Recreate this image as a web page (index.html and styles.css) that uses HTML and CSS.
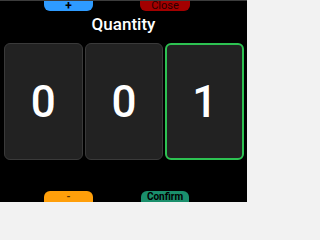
FILE: index.html
```html
<!DOCTYPE html>
<html>
<head>
<meta charset="utf-8">
<link rel="stylesheet" href="styles.css">
</head>
<body>
<div class="screen">
  <div class="btn-row top">
    <div class="btn blue">+</div>
    <div class="btn red">Close</div>
  </div>
  <div class="title">Quantity</div>
  <div class="cards">
    <div class="card">0</div>
    <div class="card">0</div>
    <div class="card active">1</div>
  </div>
  <div class="btn-row bottom">
    <div class="btn orange">-</div>
    <div class="btn green">Confirm</div>
  </div>
</div>
</body>
</html>
```
FILE: styles.css
```css
html, body {
  margin: 0;
  padding: 0;
  background: #f2f2f2;
}
.screen {
  width: 247px;
  height: 201px;
  border-top: 1px solid #3c3c3c;
  background: #000;
  display: flex;
  flex-direction: column;
  font-family: Roboto, "Liberation Sans", sans-serif;
  color: #fff;
}
.btn-row {
  display: flex;
  padding-left: 44px;
  gap: 47px;
}
.btn {
  height: 10px;
  line-height: 10px;
  text-align: center;
  color: #000;
  font-size: 11px;
}
.btn-row.top .btn {
  border-radius: 0 0 6px 6px;
}
.btn-row.bottom {
  margin-top: auto;
  gap: 48px;
}
.btn-row.bottom .btn {
  height: 11px;
  line-height: 11px;
  border-radius: 6px 6px 0 0;
  font-size: 10px;
  font-weight: bold;
}
.blue { width: 49px; background: #2e9bff; font-weight: bold; font-size: 12px; }
.red { width: 50px; background: #a30000; color: #2a0000; }
.orange { width: 49px; background: #ff9f0a; color: #5a3000; }
.green { width: 48px; background: #1a8f6c; }
.title {
  margin-top: 3px;
  height: 20px;
  line-height: 20px;
  font-size: 17px;
  text-align: center;
  font-weight: 500;
}
.cards {
  margin-top: 9px;
  display: grid;
  grid-template-columns: 1fr 1fr 1fr;
  gap: 2px;
  padding: 0 3px 0 4px;
}
.card {
  box-sizing: border-box;
  height: 117px;
  background: #222;
  border: 1px solid #3a3a3a;
  border-radius: 6px;
  display: flex;
  align-items: center;
  justify-content: center;
  font-size: 44px;
  font-weight: 500;
}
.card.active {
  border: 2px solid #2dc252;
}
```
